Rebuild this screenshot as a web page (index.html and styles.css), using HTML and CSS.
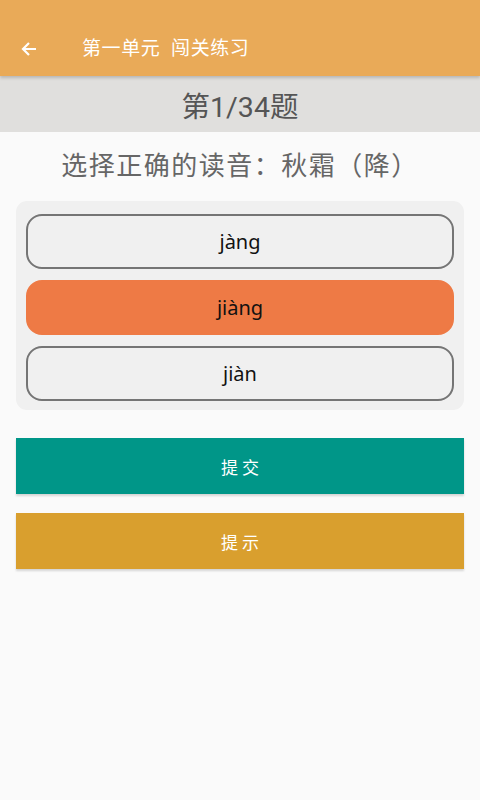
FILE: index.html
```html
<!DOCTYPE html>
<html lang="zh">
<head>
<meta charset="utf-8">
<link rel="stylesheet" href="styles.css">
</head>
<body>
<div class="app">
  <header class="topbar">
    <svg class="back" width="18" height="18" viewBox="0 0 18 18"><path d="M16 9H3M9 3L3 9l6 6" fill="none" stroke="#fff" stroke-width="2.2"/></svg>
    <span class="title">第一单元&nbsp; 闯关练习</span>
  </header>
  <div class="progress">第1/34题</div>
  <div class="question">选择正确的读音：秋霜（降）</div>
  <div class="card">
    <div class="option">jàng</div>
    <div class="option selected">jiàng</div>
    <div class="option">jiàn</div>
  </div>
  <div class="btn submit">提 交</div>
  <div class="btn hint">提 示</div>
</div>
</body>
</html>
```
FILE: styles.css
```css
html, body { margin: 0; padding: 0; }
body {
  width: 480px; height: 800px; background: #fafafa;
  font-family: Roboto, "Noto Sans CJK SC", sans-serif;
}
.app { display: flex; flex-direction: column; }
.topbar {
  height: 76px; background: #e9aa58; display: flex; align-items: center;
  padding: 22px 0 0 20px; box-sizing: border-box;
  box-shadow: 0 2px 3px rgba(0,0,0,0.18); position: relative; z-index: 1;
}
.back { flex: none; }
.title { color: #fff; font-size: 19px; letter-spacing: 0.6px; margin-left: 44px; line-height: 26px; }
.progress {
  height: 56px; background: #e0dfdd; color: #555; font-size: 28.5px;
  display: flex; align-items: center; justify-content: center;
}
.question {
  color: #666; font-size: 26px; letter-spacing: 1.5px; text-align: center;
  margin-top: 17px; line-height: 34px;
}
.card {
  margin: 18px 16px 0; background: #f0f0f0; border-radius: 11px;
  padding: 13px 10px 9px; display: flex; flex-direction: column; gap: 11px;
}
.option {
  height: 55px; box-sizing: border-box; border: 2px solid #757575; border-radius: 16px;
  display: flex; align-items: center; justify-content: center;
  font-family: "Noto Sans", Roboto, sans-serif; font-size: 20px; color: #111;
}
.option.selected { background: #ee7a45; border-color: #ee7a45; }
.btn {
  margin: 0 16px; height: 56px; display: flex; align-items: center; justify-content: center;
  color: #fff; font-size: 17px; box-shadow: 0 2px 2px rgba(0,0,0,0.15);
}
.submit { background: #009688; margin-top: 28px; }
.hint { background: #d99f2e; margin-top: 19px; }
```
